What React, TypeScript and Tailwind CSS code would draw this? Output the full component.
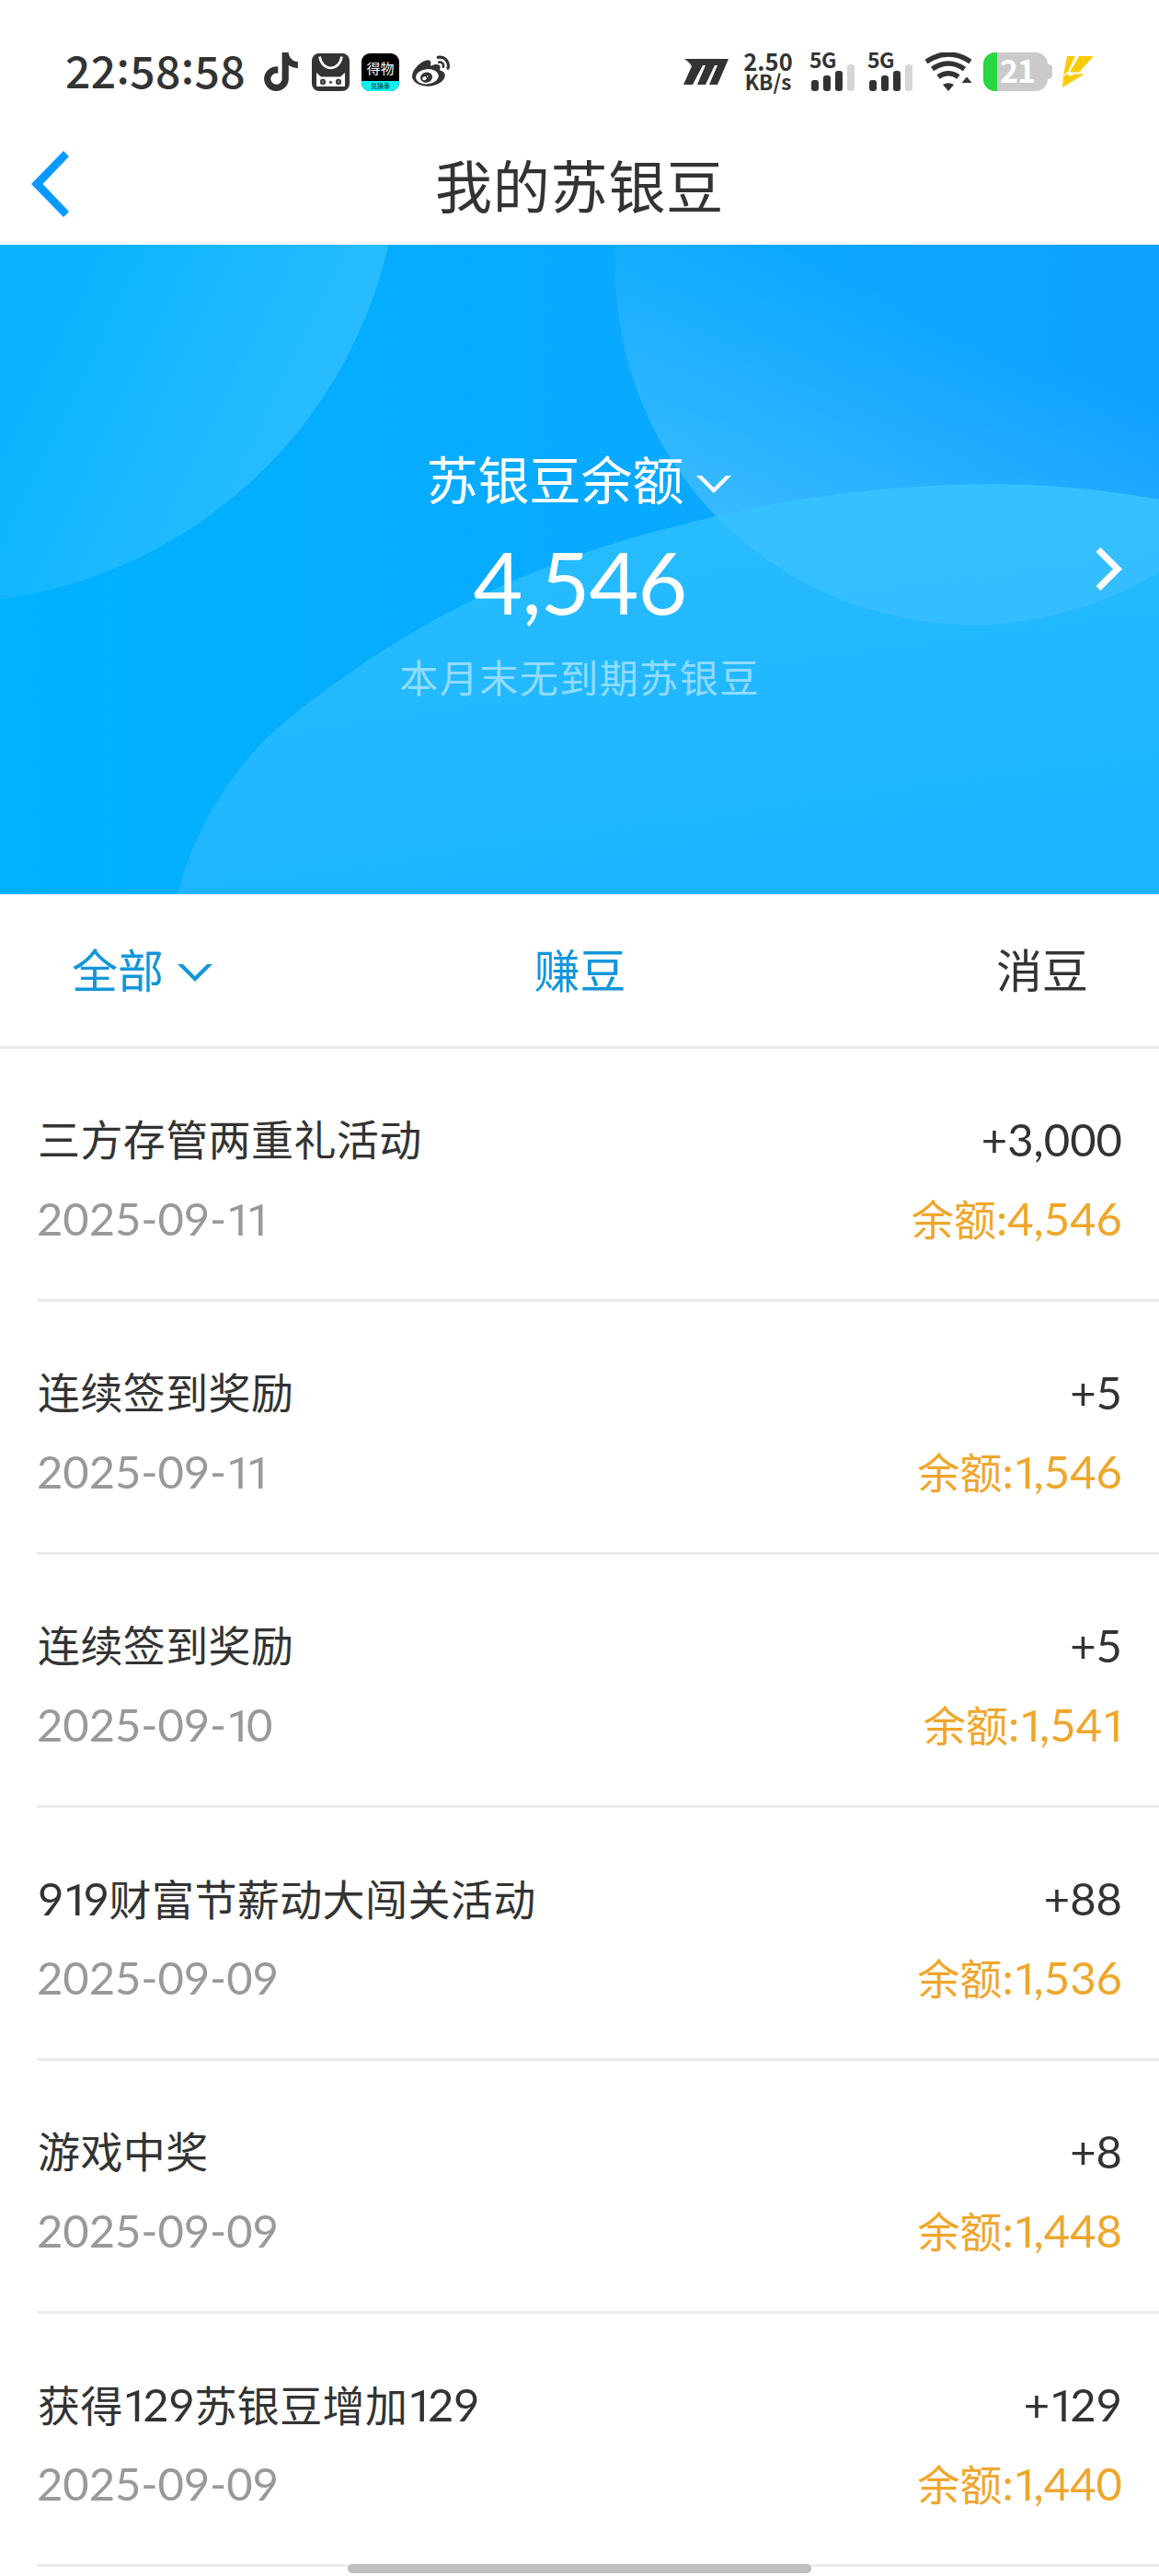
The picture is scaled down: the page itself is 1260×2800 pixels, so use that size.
import React from "react";
import { FaTiktok, FaWeibo } from "react-icons/fa6";

interface BeanRecord {
  title: string;
  date: string;
  amount: string;
  balance: string;
}

const records: BeanRecord[] = [
  { title: "三方存管两重礼活动", date: "2025-09-11", amount: "+3,000", balance: "4,546" },
  { title: "连续签到奖励", date: "2025-09-11", amount: "+5", balance: "1,546" },
  { title: "连续签到奖励", date: "2025-09-10", amount: "+5", balance: "1,541" },
  { title: "919财富节薪动大闯关活动", date: "2025-09-09", amount: "+88", balance: "1,536" },
  { title: "游戏中奖", date: "2025-09-09", amount: "+8", balance: "1,448" },
  { title: "获得129苏银豆增加129", date: "2025-09-09", amount: "+129", balance: "1,440" },
];

// Lato's "1" has a foot and is as wide as the other digits, Roboto's is plain
function Num({ children }: { children: string }) {
  return (
    <span className="font-['Lato','Noto_Sans_CJK_SC',sans-serif]">
      {children.split("").map((ch, i) => (
        <span key={i} className={ch === "1" ? "font-['Roboto',sans-serif] -mr-[0.115em]" : ""}>
          {ch}
        </span>
      ))}
    </span>
  );
}

function Mixed({ text }: { text: string }) {
  return (
    <>
      {text.split(/(\d+)/).map((part, i) =>
        /\d/.test(part) ? (
          <span key={i} className="text-[49px] tracking-[-0.4px]">
            <Num>{part}</Num>
          </span>
        ) : (
          <span key={i}>{part}</span>
        )
      )}
    </>
  );
}

function ChevronDown() {
  return (
    <svg width="38" height="19" viewBox="0 0 38 19" fill="currentColor">
      <path d="M0 0 H6 L19 13 L32 0 H38 L19 19 Z" />
    </svg>
  );
}

function Signal() {
  return (
    <div className="w-[50px] h-[42px] relative">
      <span className="absolute left-0 -top-[4px] text-[23px] leading-[23px] font-bold tracking-[-0.5px]">5G</span>
      <svg width="50" height="42" viewBox="0 0 50 42" fill="#333">
        <rect x="2" y="30" width="8" height="12" rx="3" />
        <rect x="15" y="25" width="8" height="17" rx="3" />
        <rect x="28" y="20" width="8" height="22" rx="3" />
        <rect x="41" y="13" width="8" height="29" rx="3" fill="#d6d6d6" />
      </svg>
    </div>
  );
}

function Clock({ time }: { time: string }) {
  return (
    <span className="w-[217px] pl-px text-[48px] leading-[36px] font-medium tracking-[0.4px] whitespace-nowrap">
      {time.split("").map((ch, i) => (
        <span key={i} className={ch === ":" ? "relative -top-[5px]" : ""}>
          {ch}
        </span>
      ))}
    </span>
  );
}

function StatusBar() {
  return (
    <div className="h-[133px] pt-[57px] pl-[70px] pr-[70px] flex items-start justify-between text-[#333]">
      <div className="flex items-start h-[42px]">
        <Clock time="22:58:58" />
        <FaTiktok className="w-[37px] h-[42px]" />
        <svg className="ml-[15px]" width="41" height="42" viewBox="0 0 41 42">
          <rect y="1" width="41" height="41" rx="8" fill="#333" />
          <path d="M8.500 4.500 C11 21 30 21 32.500 4.500" fill="none" stroke="#fff" strokeWidth="2.600" />
          <path d="M5 22 L10 26.500 H31 L36 22 V37 H5 Z" fill="#fff" />
          <ellipse cx="12" cy="32" rx="3" ry="3.200" fill="#333" />
          <ellipse cx="29" cy="32" rx="3" ry="3.200" fill="#333" />
          <path d="M12 30.500 V33.500 M29 30.500 V33.500" stroke="#bbb" strokeWidth="1" />
          <circle cx="20.500" cy="32.500" r="1.400" fill="#333" />
        </svg>
        <div className="ml-[13px] mt-px w-[41px] h-[41px] rounded-[9px] bg-black overflow-hidden flex flex-col items-center justify-between">
          <span className="pt-[6px] text-[15px] leading-[19px] text-white">得物</span>
          <span className="w-full h-[11px] bg-[#0ff0f0] text-center text-[7px] leading-[10px] font-bold text-[#066]">兑换季</span>
        </div>
        <FaWeibo className="ml-[14px] w-[41px] h-[43px]" />
      </div>
      <div className="flex items-start h-[42px]">
        <svg width="49" height="42" viewBox="0 0 49 42" fill="#333">
          <path d="M1 7 H49 L37 35 H28 L37 14 H34 L24 35 H15 L24 14 H21 L10 35 H0 L9 15 Q7 11 1 7 Z" />
        </svg>
        <div className="ml-[15px] -mt-px w-[56px] h-[42px] flex flex-col items-center font-bold">
          <span className="text-[25.500px] leading-[19px]">2.50</span>
          <span className="text-[22.500px] leading-[27px]">KB/s</span>
        </div>
        <div className="ml-[17px]">
          <Signal />
        </div>
        <div className="ml-[13px]">
          <Signal />
        </div>
        <svg className="ml-[12px]" width="53" height="42" viewBox="0 0 53 42" fill="none" stroke="#333">
          <path d="M2 10 Q26 -6 50 10" strokeWidth="5.500" />
          <path d="M8.500 18 Q26 6 43.500 18" strokeWidth="5.500" />
          <path d="M15 26.500 Q26 19 37 26.500" strokeWidth="5.500" />
          <path d="M20 35 Q26 31.500 32 35 L26 42 Z" fill="#333" stroke="none" />
          <path d="M46 26.500 L51.500 33 H40.500 Z" fill="#333" stroke="none" />
        </svg>
        <div className="ml-[11px] w-[70px] h-[42px] rounded-[13px] bg-[#cacaca] flex">
          <div className="w-[15px] rounded-l-[13px] bg-[#28d742]" />
          <span className="ml-[3px] text-[34px] leading-[38px] font-bold tracking-[-1px] text-white">21</span>
        </div>
        <div className="mt-[13px] w-[5px] h-[16px] rounded-r-[4px] bg-[#cacaca]" />
        <svg className="ml-[11px]" width="35" height="42" viewBox="0 0 35 42" fill="#fbcb09">
          <path d="M5 4 H14 L6 21 L1 25 Z" />
          <path d="M18 4 H34 L18 21.500 H8 Z" />
          <path d="M1 26 L6 23.500 L8 26 L13 23.500 H24 L0 38 Z" />
        </svg>
      </div>
    </div>
  );
}

function BannerBackground() {
  const hill =
    "M193 972 C212 897 256 828 315 780 C371 735 440 688 513 652.7 C583 617 660 590 740 570.7 C845 542 960 526.3 1077 526.3 C1140 526.3 1200 532 1260 543 V972 Z";
  return (
    <svg className="absolute inset-0" width="1260" height="706" viewBox="0 266 1260 706">
      <defs>
        <linearGradient id="base" x1="0" y1="0" x2="1" y2="0">
          <stop offset="0" stopColor="#00b2ff" />
          <stop offset="0.5" stopColor="#08aaff" />
          <stop offset="1" stopColor="#10a2ff" />
        </linearGradient>
        <linearGradient id="left" gradientUnits="userSpaceOnUse" x1="60" y1="340" x2="330" y2="470">
          <stop offset="0" stopColor="#0ab4ff" />
          <stop offset="1" stopColor="#28bcff" />
        </linearGradient>
        <linearGradient id="right" gradientUnits="userSpaceOnUse" x1="810" y1="590" x2="940" y2="300">
          <stop offset="0" stopColor="#fff" stopOpacity="0.2" />
          <stop offset="1" stopColor="#fff" stopOpacity="0" />
        </linearGradient>
        <linearGradient id="hill" gradientUnits="userSpaceOnUse" x1="700" y1="540" x2="760" y2="972">
          <stop offset="0" stopColor="#28bcff" />
          <stop offset="1" stopColor="#1cb4ff" />
        </linearGradient>
        <clipPath id="hillClip">
          <path d={hill} />
        </clipPath>
      </defs>
      <rect y="266" width="1260" height="706" fill="url(#base)" />
      <circle cx="-67" cy="154" r="502" fill="url(#left)" />
      <circle cx="1057" cy="291" r="388" fill="url(#right)" />
      <path d={hill} fill="url(#hill)" />
      <circle cx="1057" cy="291" r="388" fill="#fff" fillOpacity="0.08" clipPath="url(#hillClip)" />
    </svg>
  );
}

function Banner() {
  return (
    <div className="relative h-[706px] text-white">
      <BannerBackground />
      <div className="relative h-full flex flex-col items-center">
        <div className="mt-[218px] h-[70px] pr-[2px] flex items-center gap-[13px] text-[56px] leading-[70px]">
          <span>苏银豆余额</span>
          <div className="pt-[14px]">
            <ChevronDown />
          </div>
        </div>
        <div className="mt-[19px] h-[110px] pl-px text-[93px] leading-[110px] tracking-[-1px]">
          <Num>4,546</Num>
        </div>
        <div className="mt-[22px] text-[42px] leading-[60px] tracking-[1.500px] text-white/50">本月末无到期苏银豆</div>
      </div>
      <svg className="absolute right-[39px] top-[328px]" width="31" height="50" viewBox="0 0 31 50" fill="none">
        <path d="M4 3.500 L25 24.500 L4 45.500" stroke="#fff" strokeWidth="7" />
      </svg>
    </div>
  );
}

function RecordRow({ record }: { record: BeanRecord }) {
  return (
    <div className="ml-[40px] h-[275px] pt-[53px] pr-[40px] border-b-[3px] border-[#ebebeb] whitespace-nowrap">
      <div className="h-[86px] flex justify-between text-[46px] leading-[86px] text-[#333]">
        <span className="pl-px tracking-[0.4px]">
          <Mixed text={record.title} />
        </span>
        <span className="text-[49px]">
          <Num>{record.amount}</Num>
        </span>
      </div>
      <div className="h-[86px] flex justify-between text-[49px] leading-[86px]">
        <span className="tracking-[-0.1px] text-[#999]">
          <Num>{record.date}</Num>
        </span>
        <span className="text-[#f0a62b]">
          <span className="text-[46px]">余额</span>
          <Num>{":" + record.balance}</Num>
        </span>
      </div>
    </div>
  );
}

export default function App() {
  return (
    <div className="relative w-[1260px] h-[2800px] overflow-hidden bg-white font-['Noto_Sans_CJK_SC',sans-serif]">
      <StatusBar />
      <div className="h-[133px] px-[34px] flex items-center justify-between">
        <svg width="41" height="72" viewBox="0 0 41 72" fill="#069aff">
          <path d="M35 0 L41 6 L12.500 36 L41 66 L35 72 L0 36 Z" />
        </svg>
        <h1 className="text-[62px] leading-[88px] tracking-[0.8px] text-[#333]">我的苏银豆</h1>
        <div className="w-[41px]" />
      </div>
      <Banner />
      <div className="h-[168px] pl-[78px] pr-[77px] pb-[5px] flex items-center justify-between border-b-[3px] border-[#e9e9e9] text-[50px] text-[#1296db]">
        <div className="w-[154px] flex items-center gap-[15px]">
          <span className="shrink-0">全部</span>
          <div className="pt-[10px]">
            <ChevronDown />
          </div>
        </div>
        <span>赚豆</span>
        <span className="w-[154px] text-right text-[#333]">消豆</span>
      </div>
      {records.map((record, i) => (
        <RecordRow key={i} record={record} />
      ))}
      <div className="absolute left-[378px] bottom-[3px] w-[504px] h-[10px] rounded-full bg-[#bfbfbf]" />
    </div>
  );
}
